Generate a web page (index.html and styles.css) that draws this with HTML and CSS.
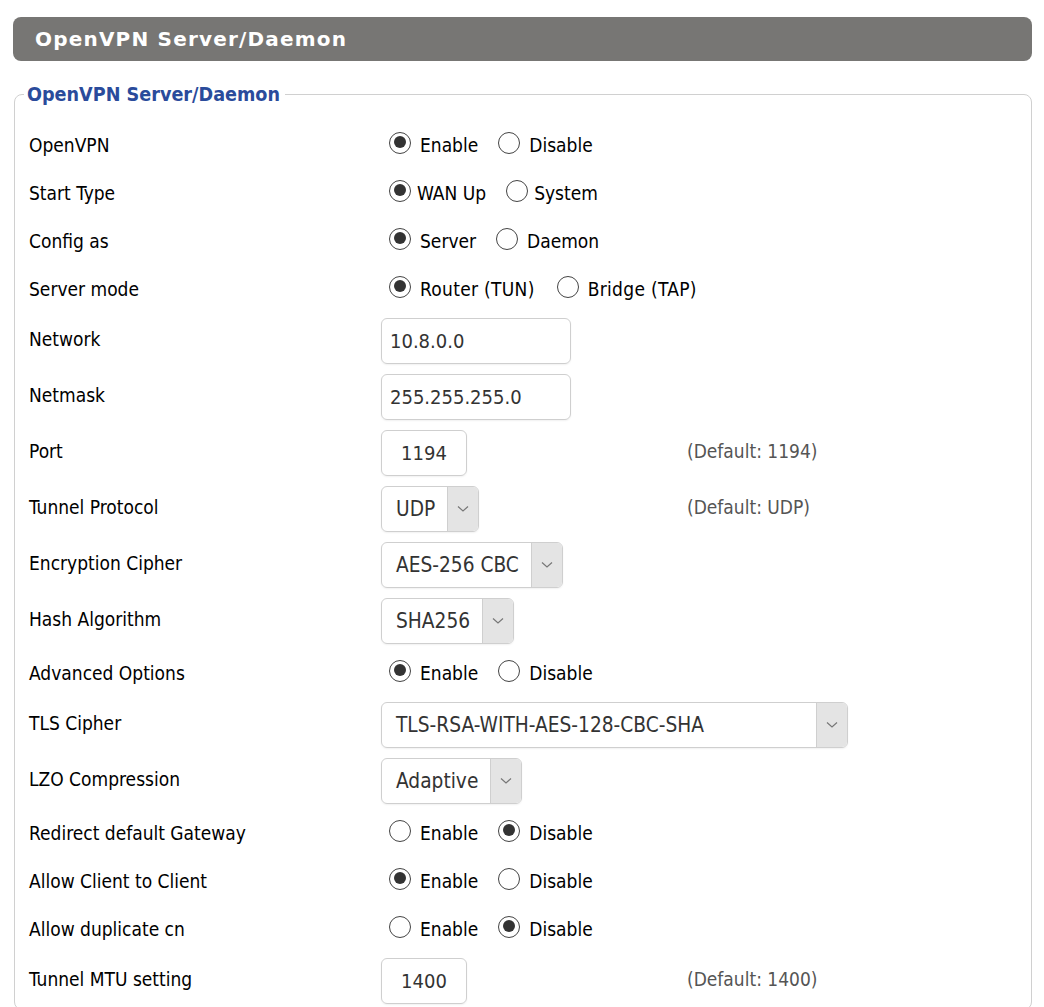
FILE: index.html
```html
<!DOCTYPE html>
<html>
<head>
<meta charset="utf-8">
<link rel="stylesheet" href="styles.css">
</head>
<body>
<div class="page">
  <h2 class="titlebar">OpenVPN Server/Daemon</h2>
  <fieldset class="box">
    <legend class="legend">OpenVPN Server/Daemon</legend>

    <div class="row r-radio">
      <div class="label">OpenVPN</div>
      <div class="value">
        <span class="radio on"></span><span class="opt">Enable</span>
        <span class="radio"></span><span class="opt">Disable</span>
      </div>
    </div>
    <div class="row r-radio">
      <div class="label">Start Type</div>
      <div class="value">
        <span class="radio on"></span><span class="opt tight">WAN Up</span>
        <span class="radio"></span><span class="opt tight">System</span>
      </div>
    </div>
    <div class="row r-radio">
      <div class="label">Config as</div>
      <div class="value">
        <span class="radio on"></span><span class="opt">Server</span>
        <span class="radio"></span><span class="opt">Daemon</span>
      </div>
    </div>
    <div class="row r-radio">
      <div class="label">Server mode</div>
      <div class="value">
        <span class="radio on"></span><span class="opt wide">Router (TUN)</span>
        <span class="radio"></span><span class="opt wide">Bridge (TAP)</span>
      </div>
    </div>

    <div class="row r-input">
      <div class="label">Network</div>
      <div class="value"><div class="input w-ip">10.8.0.0</div></div>
    </div>
    <div class="row r-input">
      <div class="label">Netmask</div>
      <div class="value"><div class="input w-ip">255.255.255.0</div></div>
    </div>
    <div class="row r-input">
      <div class="label">Port</div>
      <div class="value"><div class="input w-num">1194</div></div>
      <div class="hint">(Default: 1194)</div>
    </div>
    <div class="row r-input">
      <div class="label">Tunnel Protocol</div>
      <div class="value">
        <div class="select"><span class="sel-text">UDP</span><span class="arrow"><svg width="12" height="8" viewBox="0 0 12 8"><polyline points="1,1.5 6,6 11,1.5" fill="none" stroke="#777" stroke-width="1.2"/></svg></span></div>
      </div>
      <div class="hint">(Default: UDP)</div>
    </div>
    <div class="row r-input">
      <div class="label">Encryption Cipher</div>
      <div class="value">
        <div class="select"><span class="sel-text">AES-256 CBC</span><span class="arrow"><svg width="12" height="8" viewBox="0 0 12 8"><polyline points="1,1.5 6,6 11,1.5" fill="none" stroke="#777" stroke-width="1.2"/></svg></span></div>
      </div>
    </div>
    <div class="row r-input">
      <div class="label">Hash Algorithm</div>
      <div class="value">
        <div class="select"><span class="sel-text">SHA256</span><span class="arrow"><svg width="12" height="8" viewBox="0 0 12 8"><polyline points="1,1.5 6,6 11,1.5" fill="none" stroke="#777" stroke-width="1.2"/></svg></span></div>
      </div>
    </div>

    <div class="row r-radio">
      <div class="label">Advanced Options</div>
      <div class="value">
        <span class="radio on"></span><span class="opt">Enable</span>
        <span class="radio"></span><span class="opt">Disable</span>
      </div>
    </div>

    <div class="row r-input">
      <div class="label">TLS Cipher</div>
      <div class="value">
        <div class="select w-tls"><span class="sel-text">TLS-RSA-WITH-AES-128-CBC-SHA</span><span class="arrow"><svg width="12" height="8" viewBox="0 0 12 8"><polyline points="1,1.5 6,6 11,1.5" fill="none" stroke="#777" stroke-width="1.2"/></svg></span></div>
      </div>
    </div>
    <div class="row r-input">
      <div class="label">LZO Compression</div>
      <div class="value">
        <div class="select"><span class="sel-text">Adaptive</span><span class="arrow"><svg width="12" height="8" viewBox="0 0 12 8"><polyline points="1,1.5 6,6 11,1.5" fill="none" stroke="#777" stroke-width="1.2"/></svg></span></div>
      </div>
    </div>

    <div class="row r-radio">
      <div class="label">Redirect default Gateway</div>
      <div class="value">
        <span class="radio"></span><span class="opt">Enable</span>
        <span class="radio on"></span><span class="opt">Disable</span>
      </div>
    </div>
    <div class="row r-radio">
      <div class="label">Allow Client to Client</div>
      <div class="value">
        <span class="radio on"></span><span class="opt">Enable</span>
        <span class="radio"></span><span class="opt">Disable</span>
      </div>
    </div>
    <div class="row r-radio">
      <div class="label">Allow duplicate cn</div>
      <div class="value">
        <span class="radio"></span><span class="opt">Enable</span>
        <span class="radio on"></span><span class="opt">Disable</span>
      </div>
    </div>

    <div class="row r-input">
      <div class="label">Tunnel MTU setting</div>
      <div class="value"><div class="input w-num">1400</div></div>
      <div class="hint">(Default: 1400)</div>
    </div>
  </fieldset>
</div>
</body>
</html>
```

FILE: styles.css
```css
html, body {
  margin: 0;
  padding: 0;
  background: #fff;
}
body {
  font-family: "DejaVu Sans Condensed", "DejaVu Sans", Tahoma, sans-serif;
  font-size: 19px;
  color: #000;
}
.page {
  padding: 17px 12px 0 13px;
}
.titlebar {
  margin: 0;
  height: 44px;
  line-height: 45px;
  background: #777674;
  color: #fff;
  border-radius: 8px;
  padding: 0 0 0 22px;
  font-family: "DejaVu Sans", Verdana, sans-serif;
  font-weight: bold;
  font-size: 20px;
  letter-spacing: 1.2px;
}
.box {
  margin: 22px 0 0 1px;
  border: 1.5px solid #d0d0d0;
  border-radius: 8px;
  padding: 15px 14px 0 14px;
}
.legend {
  padding: 0 5px 0 3px;
  margin-left: -5px;
  margin-top: -1px;
  color: #2a4b9b;
  font-family: "DejaVu Sans Condensed", "DejaVu Sans", sans-serif;
  font-weight: bold;
  font-size: 19.6px;
}
.row {
  display: flex;
  align-items: center;
}
.r-radio { height: 48px; }
.r-input { height: 56px; }
.label {
  width: 352px;
  flex: none;
  margin-top: -4px;
  white-space: nowrap;
}
.r-radio .label {
  margin-top: -1px;
}
.value {
  width: 306px;
  flex: none;
  display: flex;
  align-items: center;
  white-space: nowrap;
}
.value > * {
  flex: none;
}
.hint {
  color: #555;
  font-size: 19px;
  margin-top: -4px;
  white-space: nowrap;
}
.radio {
  width: 22px;
  height: 22px;
  box-sizing: border-box;
  border: 1.5px solid #444;
  border-radius: 50%;
  margin-left: 8px;
  margin-top: -5px;
  position: relative;
}
.radio.on::after {
  content: "";
  position: absolute;
  left: 3.5px;
  top: 3.5px;
  width: 12px;
  height: 12px;
  border-radius: 50%;
  background: #333;
}
.opt {
  margin-left: 9px;
  margin-right: 12px;
}
.opt.tight {
  margin-left: 6px;
}
.opt.wide {
  letter-spacing: 0.3px;
  margin-right: 14px;
}
.input, .select {
  height: 46px;
  box-sizing: border-box;
  border: 1.5px solid #cfcfcf;
  border-radius: 6px;
  box-shadow: 0 1px 2px rgba(0,0,0,0.06);
  color: #333;
  display: flex;
  align-items: center;
}
.input {
  padding: 0 8px;
  font-size: 20px;
}
.w-ip { width: 190px; }
.w-num { width: 86px; justify-content: center; padding: 0; }
.select {
  overflow: hidden;
  font-size: 20.7px;
}
.sel-text {
  padding: 0 12px 0 14px;
  white-space: nowrap;
}
.w-tls { width: 467px; }
.w-tls .sel-text { flex: 1; }
.arrow {
  width: 30px;
  align-self: stretch;
  background: #e4e4e4;
  border-left: 1.5px solid #cfcfcf;
  display: flex;
  align-items: center;
  justify-content: center;
}
```
